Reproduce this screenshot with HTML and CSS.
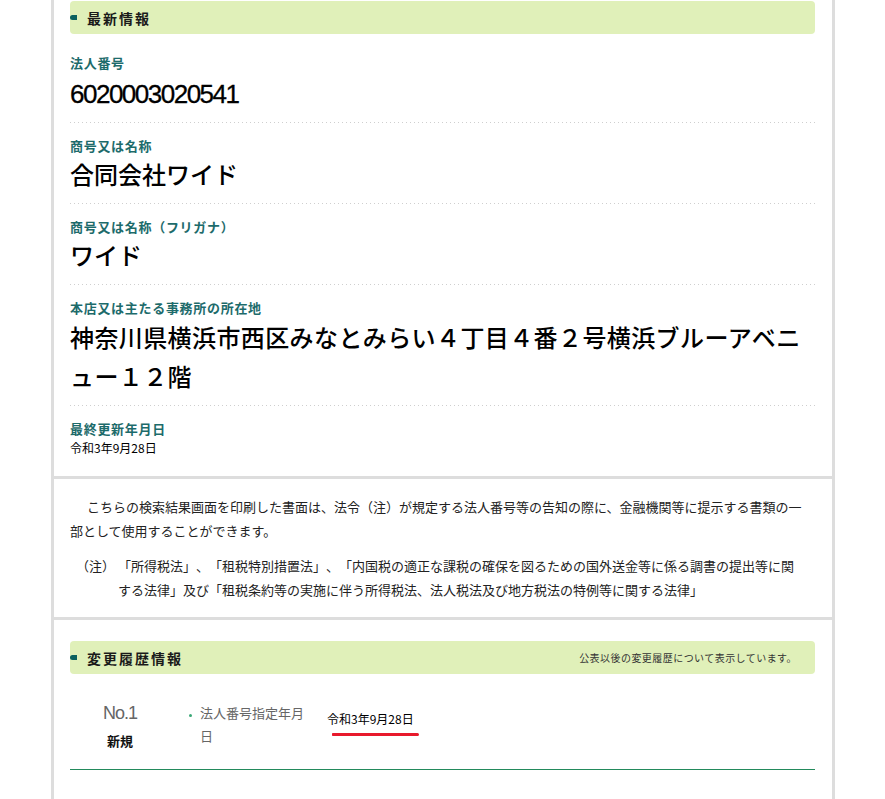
FILE: index.html
```html
<!DOCTYPE html>
<html lang="ja">
  <head>
    <meta charset="UTF-8" />
    <title>法人番号 検索結果</title>
    <meta name="viewport" content="width=device-width,initial-scale=1" />
    <link rel="stylesheet" href="styles.css">
  </head>
  <body>
    <div class="page">
      <!-- 最新情報 -->
      <section class="block latest">
        <h2 class="bar"><span class="bar-title">最新情報</span></h2>
        <dl class="info">
          <div class="info-item">
            <dt>法人番号</dt>
            <dd class="num">6020003020541</dd>
          </div>
          <div class="info-item">
            <dt>商号又は名称</dt>
            <dd>合同会社ワイド</dd>
          </div>
          <div class="info-item">
            <dt>商号又は名称（フリガナ）</dt>
            <dd>ワイド</dd>
          </div>
          <div class="info-item">
            <dt>本店又は主たる事務所の所在地</dt>
            <dd class="addr">神奈川県横浜市西区みなとみらい４丁目４番２号横浜ブルーアベニュー１２階</dd>
          </div>
          <div class="info-item">
            <dt>最終更新年月日</dt>
            <dd class="date">令和3年9月28日</dd>
          </div>
        </dl>
      </section>

      <!-- 注意書き -->
      <section class="block notice">
        <p class="lead">こちらの検索結果画面を印刷した書面は、法令（注）が規定する法人番号等の告知の際に、金融機関等に提示する書類の一部として使用することができます。</p>
        <dl class="note">
          <dt>（注）</dt>
          <dd>「所得税法」、「租税特別措置法」、「内国税の適正な課税の確保を図るための国外送金等に係る調書の提出等に関する法律」及び「租税条約等の実施に伴う所得税法、法人税法及び地方税法の特例等に関する法律」</dd>
        </dl>
      </section>

      <!-- 変更履歴情報 -->
      <section class="block history">
        <h2 class="bar">
          <span class="bar-title">変更履歴情報</span>
          <span class="bar-note">公表以後の変更履歴について表示しています。</span>
        </h2>
        <div class="hist-row">
          <div class="hist-no">
            <span class="no">No.1</span>
            <span class="kind">新規</span>
          </div>
          <ul class="hist-items">
            <li>法人番号指定年月日</li>
          </ul>
          <div class="hist-date"><span class="marked">令和3年9月28日</span></div>
        </div>
      </section>
    </div>
  </body>
</html>
```

FILE: styles.css
```css
body {
  margin: 0;
  background: #fff;
  color: #222;
  font-family: "Noto Sans CJK JP", "Noto Sans", sans-serif;
}
.page {
  margin-left: 51px;
  width: 778px;
  min-height: 799px;
  border-left: 3px solid #ddd;
  border-right: 3px solid #ddd;
}
.block {
  padding: 0 17px 0 16px;
  border-bottom: 3px solid #ddd;
}
.latest {
  padding-top: 1px;
}

/* 見出しバー */
.bar {
  margin: 0;
  height: 33px;
  display: flex;
  align-items: center;
  background: #e0f0b9;
  border-radius: 4px;
  padding-right: 18px;
  font-size: 14px;
  font-weight: bold;
  color: #1a1a1a;
}
.bar::before {
  content: "";
  width: 7px;
  height: 5px;
  margin-right: 10px;
  background: #0b615e;
  border-radius: 3px 0 0 3px;
}
.bar-title {
  letter-spacing: 2px;
}
.bar-note {
  margin-left: auto;
  font-size: 10px;
  font-weight: normal;
  letter-spacing: 0.45px;
  color: #333;
}

/* 最新情報 */
.info {
  margin: 6px 0 0;
}
.info-item {
  padding: 14px 0 11px;
  background: linear-gradient(to right, #cfcfcf 1px, transparent 1px) repeat-x left bottom / 4px 1px;
}
.info-item:last-child {
  background: none;
  padding-bottom: 18px;
}
.info dt {
  font-size: 13px;
  line-height: 18px;
  font-weight: bold;
  letter-spacing: 0.7px;
  color: #1d6b6b;
}
.info dd {
  margin: 0;
  font-size: 24px;
  line-height: 38px;
  font-weight: 500;
  color: #000;
}
.info dd.num {
  padding-top: 4px;
  line-height: 36px;
  font-family: "Liberation Sans", Arial, sans-serif;
  font-size: 26px;
  font-weight: normal;
  letter-spacing: -1.5px;
  -webkit-text-stroke: 0.3px #000;
}
.info dd.addr {
  line-height: 39px;
  letter-spacing: 0.4px;
  line-break: loose;
}
.info dd.date {
  font-size: 12px;
  line-height: 20px;
  font-weight: normal;
}

/* 注意書き */
.notice {
  padding: 16px 29px 15px 16px;
  font-size: 13px;
  line-height: 24px;
  text-spacing-trim: space-all;
}
.lead {
  margin: 0 0 11px;
  text-indent: 17px;
}
.note {
  display: flex;
  margin: 0;
}
.note dt {
  flex: 0 0 42px;
  margin-left: 6px;
}
.note dd {
  margin: 0;
}

/* 変更履歴情報 */
.history {
  padding-top: 21px;
  border-bottom: none;
}
.hist-row {
  display: flex;
  align-items: flex-start;
  padding: 27px 0 18px;
  border-bottom: 1px solid #238a5c;
}
.hist-no {
  width: 100px;
  display: flex;
  flex-direction: column;
  align-items: center;
}
.no {
  font-family: "Liberation Sans", Arial, sans-serif;
  font-size: 18px;
  line-height: 24px;
  letter-spacing: -1px;
  color: #666;
}
.kind {
  margin-top: 6px;
  font-size: 13px;
  line-height: 20px;
  font-weight: bold;
  color: #111;
}
.hist-items {
  width: 122px;
  margin: 0 0 0 18px;
  padding: 0;
  list-style: none;
}
.hist-items li {
  position: relative;
  padding-left: 12px;
  font-size: 13px;
  line-height: 23px;
  color: #666;
}
.hist-items li::before {
  content: "";
  position: absolute;
  left: 1px;
  top: 13px;
  width: 3px;
  height: 3px;
  border-radius: 50%;
  background: #3aa876;
}
.hist-date {
  margin: 8px 0 0 17px;
  font-size: 12px;
  line-height: 20px;
  color: #000;
}
.marked {
  position: relative;
  display: inline-block;
}
.marked::after {
  content: "";
  position: absolute;
  left: 5px;
  right: -5px;
  top: 24px;
  height: 3px;
  background: #e8192c;
  border-radius: 1px 2px 2px 1px;
}
```
